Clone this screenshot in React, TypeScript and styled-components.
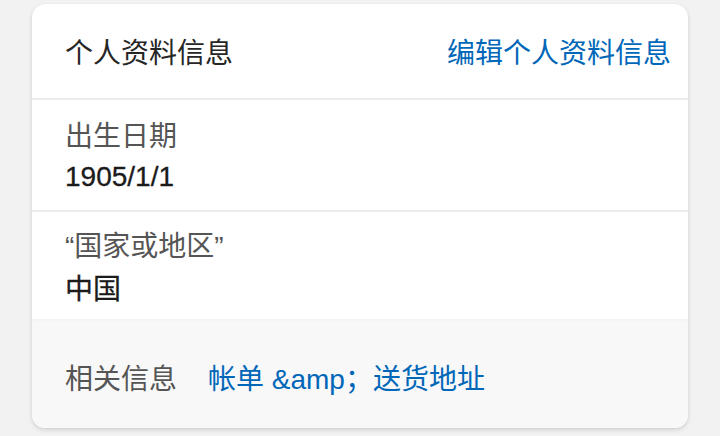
import React from "react";
import styled, { createGlobalStyle } from "styled-components";

const GlobalStyle = createGlobalStyle`
	html, body {
		margin: 0;
		padding: 0;
		background: #f2f2f2;
	}
	body {
		font-family: "Liberation Sans", "Noto Sans CJK SC", sans-serif;
	}
`;

const Page = styled.div`
	padding: 4px 32px 8px 32px;
`;

const Card = styled.section`
	background: #ffffff;
	border-radius: 13px;
	box-shadow: 0 2px 4px rgba(0, 0, 0, 0.14), 0 0 1px rgba(0, 0, 0, 0.08);
	overflow: hidden;
`;

const Header = styled.header`
	height: 94px;
	display: flex;
	align-items: center;
	justify-content: space-between;
	padding: 0 17px 0 33px;
	border-bottom: 2px solid #ebebeb;
`;

const Title = styled.h2`
	margin: 0;
	font-size: 28px;
	font-weight: 400;
	color: #262626;
`;

const Link = styled.a`
	font-size: 28px;
	color: #0067b8;
	text-decoration: none;
	cursor: pointer;
`;

const Field = styled.div<{ $last?: boolean }>`
	display: flex;
	flex-direction: column;
	padding: ${({ $last }) => ($last ? "15px 33px 9px" : "17px 33px 13px")};
	border-bottom: ${({ $last }) => ($last ? "none" : "2px solid #ebebeb")};
	line-height: 40px;
`;

const Label = styled.span`
	font-size: 28px;
	color: #555555;
`;

const Value = styled.span<{ $gap?: number }>`
	font-size: 28px;
	color: #1b1b1b;
	margin-top: ${({ $gap }) => $gap ?? 0}px;
	-webkit-text-stroke: 0.3px #1b1b1b;
`;

const Footer = styled.footer`
	background: #f8f8f8;
	height: 109px;
	display: flex;
	align-items: center;
	gap: 31px;
	padding: 6px 33px 0;
	box-sizing: border-box;
	box-shadow: inset 0 2px 3px rgba(0, 0, 0, 0.02);
`;

export default function App() {
	return (
		<Page>
			<GlobalStyle />
			<Card>
				<Header>
					<Title>个人资料信息</Title>
					<Link>编辑个人资料信息</Link>
				</Header>
				<Field>
					<Label>出生日期</Label>
					<Value>1905/1/1</Value>
				</Field>
				<Field $last>
					<Label>“国家或地区”</Label>
					<Value $gap={3}>中国</Value>
				</Field>
				<Footer>
					<Label>相关信息</Label>
					<Link>帐单 &amp;amp；送货地址</Link>
				</Footer>
			</Card>
		</Page>
	);
}
